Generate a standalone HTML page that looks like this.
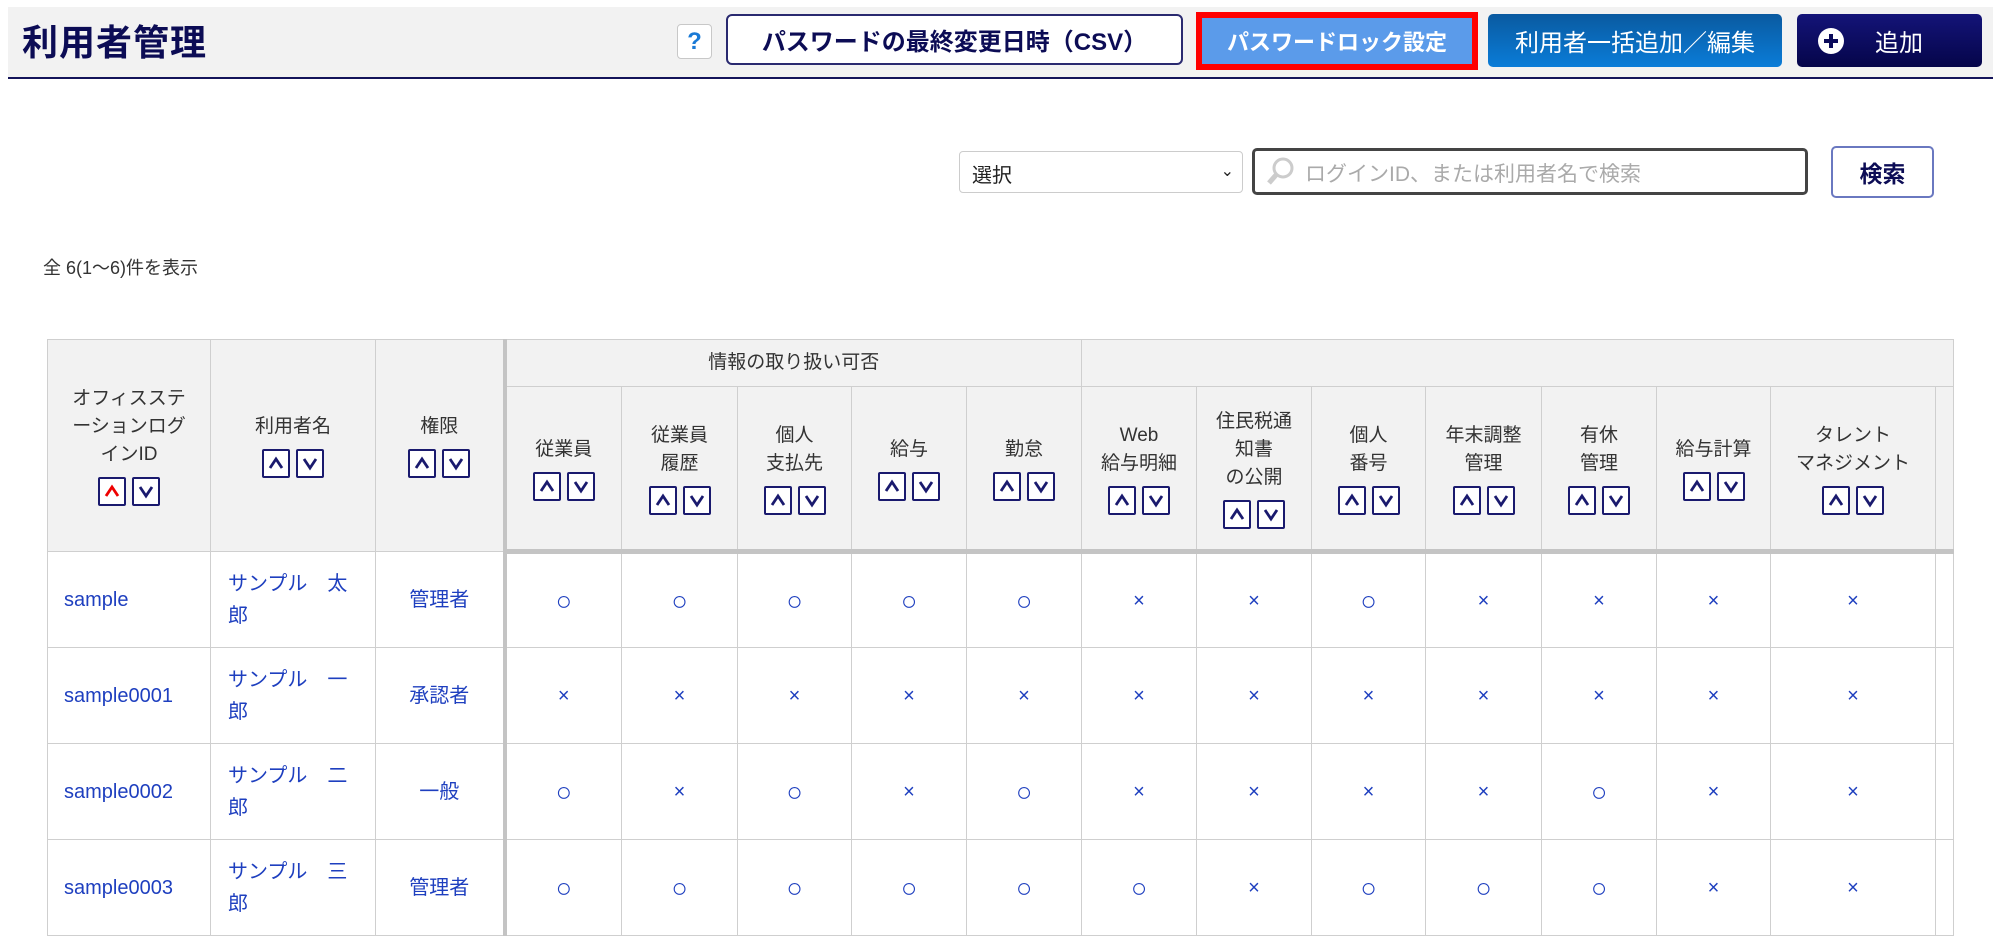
<!DOCTYPE html>
<html><head><meta charset="utf-8"><style>
*{box-sizing:border-box;margin:0;padding:0}
body{width:2000px;height:935px;overflow:hidden;background:#fff;font-family:"Liberation Sans","Noto Sans CJK JP",sans-serif;color:#333;position:relative}
.hdr{position:absolute;left:8px;top:7px;width:1985px;height:72px;background:#f2f2f2;border-bottom:2px solid #14145a}
.title{position:absolute;left:22px;top:14px;font-size:36px;font-weight:bold;color:#0c0c55;letter-spacing:1px}
.btn{position:absolute;display:flex;align-items:center;justify-content:center;font-size:23px}
.help{left:677px;top:24px;width:35px;height:35px;border:1px solid #c8c8c8;border-radius:4px;background:#fff;color:#1a7ad6;font-weight:bold;font-size:24px}
.csv{left:726px;top:14px;width:457px;height:51px;border:2px solid #2a2a70;border-radius:6px;background:#fff;color:#0c0c55;font-weight:bold;font-size:24px}
.lock{left:1196px;top:12px;width:282px;height:58px;border:6px solid #f00;background:#5b9bea;color:#fff;font-weight:bold;font-size:22px}
.bulk{left:1488px;top:14px;width:294px;height:53px;border-radius:5px;background:linear-gradient(#0a5aa0,#0a7cd8);color:#fff;font-size:24px}
.add{left:1797px;top:14px;width:185px;height:53px;border-radius:5px;background:linear-gradient(#141478,#05054a);color:#fff;font-size:24px;justify-content:flex-start}
.sel{position:absolute;left:959px;top:151px;width:284px;height:42px;border:1px solid #ccc;border-radius:4px;font-size:20px;padding:7px 12px;color:#222}
.inp{position:absolute;left:1252px;top:148px;width:556px;height:47px;border:3px solid #444;border-radius:5px;font-size:21px;color:#aaa;padding:7px 0 0 50px}
.sb{position:absolute;left:1831px;top:146px;width:103px;height:52px;border:2px solid #6a78c0;border-radius:5px;font-size:23px;font-weight:bold;color:#0c0c55;display:flex;align-items:center;justify-content:center;background:#fff}
.cnt{position:absolute;left:43px;top:254px;font-size:18px;color:#333}
table{position:absolute;left:47px;top:339px;border-collapse:collapse;table-layout:fixed;width:1906px}
th{background:#f2f2f2;border:1px solid #cfcfcf;font-weight:normal;font-size:19px;line-height:28px;color:#333;vertical-align:middle;padding:0}
td{border:1px solid #cfcfcf;text-align:center;font-size:20px;color:#1e3fbf;height:96px;line-height:32px}
td.o{font-size:27px}
.thick{border-left:4px solid #c4c4c4}
thead tr:last-child th{border-bottom:5px solid #c4c4c4}
.s{display:inline-block;width:28px;height:29px;border:2px solid #1a1a6e;border-radius:2px;background:#fff;margin:8px 3px 0;vertical-align:top}
.s svg{display:block;width:24px;height:25px}
</style></head><body>
<div class="hdr"></div>
<div class="title">利用者管理</div>
<div class="btn help">?</div>
<div class="btn csv">パスワードの最終変更日時（CSV）</div>
<div class="btn lock">パスワードロック設定</div>
<div class="btn bulk">利用者一括追加／編集</div>
<div class="btn add"><svg width="28" height="28" viewBox="0 0 28 28" style="margin-left:20px"><circle cx="14" cy="14" r="13" fill="#fff"/><path d="M14 7v14M7 14h14" stroke="#0a0a5a" stroke-width="4"/></svg><span style="margin-left:30px">追加</span></div>
<div class="sel">選択<span style="position:absolute;right:8px;top:9px;font-size:16px">⌄</span></div>
<div class="inp"><svg width="34" height="34" viewBox="0 0 34 34" style="position:absolute;left:8px;top:4px"><circle cx="20" cy="13" r="9" fill="none" stroke="#ccc" stroke-width="3"/><path d="M13 20L6 28" stroke="#ccc" stroke-width="5"/></svg>ログインID、または利用者名で検索</div>
<div class="sb">検索</div>
<div class="cnt">全 6(1～6)件を表示</div>
<table>
<colgroup><col style="width:163px"><col style="width:165px"><col style="width:129px"><col style="width:117px"><col style="width:116px"><col style="width:114px"><col style="width:115px"><col style="width:115px"><col style="width:115px"><col style="width:115px"><col style="width:114px"><col style="width:116px"><col style="width:115px"><col style="width:114px"><col style="width:165px"><col style="width:18px"></colgroup>
<thead>
<tr style="height:47px">
<th rowspan="2">オフィスステ<br>ーションログ<br>インID<br><span class="s"><svg viewBox="0 0 24 25"><path d="M6 17L12 8L18 17" fill="none" stroke="#e00" stroke-width="2.8"/></svg></span><span class="s"><svg viewBox="0 0 24 25"><path d="M6 8L12 17L18 8" fill="none" stroke="#1a1a6e" stroke-width="2.8"/></svg></span></th>
<th rowspan="2">利用者名<br>SORT</th>
<th rowspan="2">権限<br>SORT</th>
<th colspan="5" class="thick">情報の取り扱い可否</th>
<th colspan="8"></th>
</tr>
<tr style="height:165px">
<th class="thick">従業員<br>SORT</th>
<th>従業員<br>履歴<br>SORT</th>
<th>個人<br>支払先<br>SORT</th>
<th>給与<br>SORT</th>
<th>勤怠<br>SORT</th>
<th>Web<br>給与明細<br>SORT</th>
<th>住民税通<br>知書<br>の公開<br>SORT</th>
<th>個人<br>番号<br>SORT</th>
<th>年末調整<br>管理<br>SORT</th>
<th>有休<br>管理<br>SORT</th>
<th>給与計算<br>SORT</th>
<th>タレント<br>マネジメント<br>SORT</th>
<th></th>
</tr>
</thead>
<tbody id="tb"></tbody>
</table>
<script>
var S='<span class="s"><svg viewBox="0 0 24 25"><path d="M6 17L12 8L18 17" fill="none" stroke="#1a1a6e" stroke-width="2.8"/></svg></span><span class="s"><svg viewBox="0 0 24 25"><path d="M6 8L12 17L18 8" fill="none" stroke="#1a1a6e" stroke-width="2.8"/></svg></span>';
document.querySelectorAll('th').forEach(function(t){t.innerHTML=t.innerHTML.replace('SORT',S)});
var rows=[['sample','太','管理者','ooooo','xxoxxxx'],['sample0001','一','承認者','xxxxx','xxxxxxx'],['sample0002','二','一般','oxoxo','xxxxoxx'],['sample0003','三','管理者','ooooo','oxoooxx']];
var h='';rows.forEach(function(r){h+='<tr><td style="text-align:left;padding-left:16px">'+r[0]+'</td><td style="text-align:left;padding-left:17px">サンプル　'+r[1]+'<br>郎</td><td>'+r[2]+'</td>';
var m=r[3]+r[4];for(var i=0;i<12;i++){var c=(i==0?'thick ':'')+(m[i]=='o'?'o':'');h+='<td class="'+c+'">'+(m[i]=='o'?'○':'×')+'</td>';}h+='<td></td></tr>';});
document.getElementById('tb').innerHTML=h;
</script>
</body></html>
